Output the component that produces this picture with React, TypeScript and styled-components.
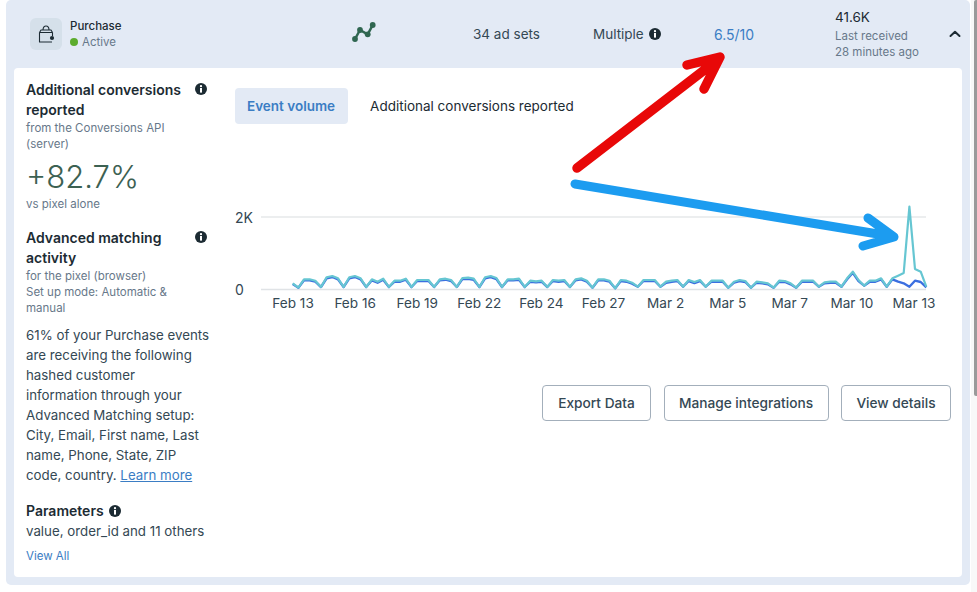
import React from "react";
import styled, { createGlobalStyle } from "styled-components";

const Global = createGlobalStyle`
  html, body { margin: 0; padding: 0; background: #fff; overflow: hidden; }
  body { font-family: "Inter", "Noto Sans", sans-serif; color: #1c2b33; }
`;

const Page = styled.div`
  position: relative;
  width: 977px;
  height: 592px;
  overflow: hidden;
`;

const Card = styled.div`
  margin: 0 7px 0 6px;
  height: 585px;
  padding: 0 8px 8px;
  box-sizing: border-box;
  background: #e3eaf5;
  border-radius: 5px;
  display: flex;
  flex-direction: column;
`;

const Header = styled.div`
  height: 68px;
  flex: none;
  display: grid;
  grid-template-columns: 322px 121px 120px 121px 121px 115px 1fr;
  padding-left: 16px;
  align-items: center;
  font-size: 13.5px;
  color: #344854;
`;

const Identity = styled.div`
  display: flex;
  align-items: center;
  gap: 8px;
`;

const IconBox = styled.div`
  width: 32px;
  height: 32px;
  border-radius: 6px;
  background: #d5e0ea;
  display: flex;
  align-items: center;
  justify-content: center;
`;

const Name = styled.div`
  font-size: 11.5px;
  font-weight: 500;
  line-height: 16px;
  color: #1c2b33;
`;

const Status = styled.div`
  display: flex;
  align-items: center;
  gap: 4px;
  font-size: 11.5px;
  line-height: 16px;
  color: #67788a;
`;

const Dot = styled.span`
  width: 8px;
  height: 8px;
  border-radius: 50%;
  background: #5cac2e;
`;

const TrendCell = styled.div`
  display: flex;
  margin-top: -4px;
`;

const MultipleCell = styled.div`
  display: flex;
  align-items: center;
  gap: 5px;
`;

const Score = styled.div`
  font-size: 14px;
  color: #3b7dc4;
`;

const Received = styled.div`
  white-space: nowrap;
`;

const Count = styled.div`
  font-size: 13.5px;
  line-height: 18px;
  margin-bottom: 2px;
  color: #1c2b33;
`;

const Muted = styled.div`
  font-size: 11.5px;
  line-height: 16px;
  color: #67788a;
`;

const Chevron = styled.div`
  display: flex;
  margin-left: -1px;
`;

const Body = styled.div`
  flex: 1;
  min-height: 0;
  background: #fff;
  border-radius: 4px;
  display: flex;
`;

const Side = styled.div`
  width: 186px;
  margin-left: 12px;
  padding-top: 12px;
  flex: none;
  display: flex;
  flex-direction: column;
`;

const SideHead = styled.div`
  display: flex;
  justify-content: space-between;
  align-items: flex-start;
  font-size: 14px;
  font-weight: 600;
  line-height: 20px;
  color: #1c2b33;
`;

const ParamHead = styled.div`
  display: flex;
  align-items: center;
  gap: 5px;
  font-size: 14px;
  font-weight: 600;
  line-height: 20px;
  color: #1c2b33;
`;

const HeadIcon = styled.span`
  margin: 3px 5px 0 0;
  display: flex;
`;

const Small = styled.div`
  max-width: 170px;
  font-size: 11.5px;
  line-height: 16px;
  color: #67788a;
`;

const Big = styled.div`
  font-size: 31px;
  font-weight: 300;
  line-height: 38px;
  margin: 6px 0 0;
  color: #3c6152;
`;

const Section = styled.div<{ $gap: number }>`
  margin-top: ${(p) => p.$gap}px;
`;

const Para = styled.div`
  font-size: 13.3px;
  line-height: 20px;
  color: #344854;
`;

const TextLink = styled.a`
  color: #3b7dc4;
  text-decoration: underline;
`;

const ViewAll = styled.a`
  display: block;
  margin-top: 7px;
  font-size: 11.5px;
  line-height: 16px;
  color: #3b7dc4;
`;

const Main = styled.div`
  flex: 1;
  min-width: 0;
  padding: 20px 11px 0 23px;
  display: flex;
  flex-direction: column;
`;

const Tabs = styled.div`
  display: flex;
  align-items: center;
  gap: 22px;
`;

const ActiveTab = styled.div`
  height: 36px;
  padding: 0 13px 0 12px;
  background: #e3eaf5;
  border-radius: 4px;
  display: flex;
  align-items: center;
  font-size: 13.5px;
  font-weight: 600;
  color: #3b7dc4;
`;

const Tab = styled.div`
  font-size: 13.5px;
  color: #1c2b33;
`;

const ChartArea = styled.div`
  margin-top: 75px;
  display: grid;
  grid-template-columns: 26px 1fr;
`;

const YAxis = styled.div`
  grid-row: 1 / 3;
  height: 100px;
  display: flex;
  flex-direction: column;
  justify-content: space-between;
  font-size: 14px;
  line-height: 18px;
  color: #344854;
  padding-top: 10px;
  box-sizing: border-box;
`;

const Plot = styled.svg`
  display: block;
`;

const XAxis = styled.div`
  display: grid;
  grid-template-columns: repeat(11, 62.1px);
  margin-left: 1px;
  font-size: 13.6px;
  line-height: 18px;
  color: #344854;
  text-align: center;
  white-space: nowrap;
`;

const Actions = styled.div`
  margin-top: 73px;
  display: flex;
  justify-content: flex-end;
  gap: 12.5px;
`;

const Button = styled.button<{ $width: number }>`
  width: ${(p) => p.$width}px;
  height: 36px;
  padding: 0;
  background: #fff;
  border: 1px solid #a3afbb;
  border-radius: 4px;
  font-family: inherit;
  font-size: 13.7px;
  font-weight: 500;
  color: #344854;
`;

const Overlay = styled.svg`
  position: absolute;
  left: 0;
  top: 0;
  pointer-events: none;
`;

const Track = styled.div`
  position: absolute;
  right: 0;
  top: 0;
  width: 6px;
  height: 592px;
  background: #f8f8f8;
`;

const Thumb = styled.div`
  position: absolute;
  right: 0;
  top: 0;
  width: 3px;
  height: 396px;
  border-radius: 2px 0 0 2px;
  background: #9a9a9a;
`;

const Info = () => (
  <svg width="12" height="12" viewBox="0 0 12 12" style={{ flex: "none" }}>
    <circle cx="6" cy="6" r="6" fill="#1c2b33" />
    <rect x="5" y="5" width="2" height="4.6" fill="#fff" />
    <circle cx="6" cy="3.2" r="1.15" fill="#fff" />
  </svg>
);

const dips = [293,291,291,291,291,291,291,291,291,291,291,291,291,293,295,290,290,290,290,293,293,293,293,290,290,287,290,0];
const days: number[][] = [
  [268,268,272],[262,258,265],[262,258,265],[268,275,266],[272,272,266],[270,270,270],[268,266,270],
  [264,263,266],[262,258,264],[268,268,266],[272,274,272],[270,272,270],[268,265,272],[268,268,272],
  [270,272,278],[270,270,270],[275,272,270],[270,276,270],[272,272,272],[275,270,273],[275,277,280],
  [272,273,280],[272,272,272],[277,275,275],[265,245,270],[272,272,265],[265,257,249],[237,245,290],
];
const blueLast: number[][] = [[268,275,280],[272,276,292]];

const px = (i: number) => 292.7 + (i * 22.63) / 4;
const py = (z: number) => 190 + z / 3;

function series(blue: boolean) {
  const pts: [number, number][] = [[px(0), py(280 + (blue ? 2 : 0))]];
  for (let d = 0; d < 28; d++) {
    let dip = dips[d];
    let vals = days[d];
    if (d === 27) dip = blue ? 290 : 50;
    if (blue && d === 26) vals = blueLast[0];
    if (blue && d === 27) vals = blueLast[1];
    pts.push([px(d * 4 + 1), py(dip)]);
    vals.forEach((v, k) => {
      const off = blue && d < 26 ? 3 : 0;
      pts.push([px(d * 4 + 2 + k), py(v + off)]);
    });
  }
  return pts.map(([x, y]) => `${x.toFixed(1)},${y.toFixed(1)}`).join(" ");
}

const labels = ["Feb 13","Feb 16","Feb 19","Feb 22","Feb 24","Feb 27","Mar 2","Mar 5","Mar 7","Mar 10","Mar 13"];

export default function App() {
  return (
    <Page>
      <Global />
      <Track />
      <Thumb />
      <Card>
        <Header>
          <Identity>
            <IconBox>
              <svg width="20" height="20" viewBox="0 0 20 20" fill="none" stroke="#1c2b33" strokeWidth="1.100" strokeLinejoin="round">
                <path d="M3.500 8.500 5 6h10l1.500 2.500M3.500 8.500h13V12M3.500 8.500v9.500h12.500" />
                <path d="M7 6C7 .6 13 .6 13 6" />
                <circle cx="16" cy="14" r="2.100" fill="#1c2b33" stroke="none" />
              </svg>
            </IconBox>
            <div>
              <Name>Purchase</Name>
              <Status><Dot />Active</Status>
            </div>
          </Identity>
          <TrendCell>
            <svg width="24" height="20" viewBox="0 0 24 20" fill="none" stroke="#2f6650" strokeWidth="2.500" strokeLinejoin="round">
              <path d="M3 17 8 8l7.700 4.300L20.700 3" />
              <circle cx="3" cy="17" r="2.900" fill="#2f6650" stroke="none" />
              <circle cx="8" cy="8" r="2.900" fill="#2f6650" stroke="none" />
              <circle cx="15.700" cy="12.300" r="2.900" fill="#2f6650" stroke="none" />
              <circle cx="20.700" cy="3" r="2.900" fill="#2f6650" stroke="none" />
            </svg>
          </TrendCell>
          <div>34 ad sets</div>
          <MultipleCell>Multiple <Info /></MultipleCell>
          <Score>6.5/10</Score>
          <Received>
            <Count>41.6K</Count>
            <Muted>Last received</Muted>
            <Muted>28 minutes ago</Muted>
          </Received>
          <Chevron>
            <svg width="12" height="8" viewBox="0 0 12 8" fill="none" stroke="#1c2b33" strokeWidth="2" strokeLinecap="round" strokeLinejoin="round">
              <path d="M1.500 6 6 1.800 10.500 6" />
            </svg>
          </Chevron>
        </Header>
        <Body>
          <Side>
            <SideHead>
              <div>Additional conversions reported</div>
              <HeadIcon><Info /></HeadIcon>
            </SideHead>
            <Small>from the Conversions API (server)</Small>
            <Big>+82.7%</Big>
            <Small>vs pixel alone</Small>
            <Section $gap={16}>
              <SideHead>
                <div>Advanced matching activity</div>
                <HeadIcon><Info /></HeadIcon>
              </SideHead>
              <Small>for the pixel (browser)</Small>
              <Small>Set up mode: Automatic &amp; manual</Small>
            </Section>
            <Section $gap={9}>
              <Para>
                61% of your Purchase events<br />
                are receiving the following<br />
                hashed customer<br />
                information through your<br />
                Advanced Matching setup:<br />
                City, Email, First name, Last<br />
                name, Phone, State, ZIP<br />
                code, country. <TextLink>Learn more</TextLink>
              </Para>
            </Section>
            <Section $gap={16}>
              <ParamHead>Parameters <Info /></ParamHead>
              <Para>value, order_id and 11 others</Para>
              <ViewAll>View All</ViewAll>
            </Section>
          </Side>
          <Main>
            <Tabs>
              <ActiveTab>Event volume</ActiveTab>
              <Tab>Additional conversions reported</Tab>
            </Tabs>
            <ChartArea>
              <YAxis>
                <div>2K</div>
                <div>0</div>
              </YAxis>
              <Plot width="691" height="95" viewBox="261 199 691 95">
                <line x1="261" x2="926" y1="217" y2="217" stroke="#e6e8ea" strokeWidth="1.500" />
                <line x1="261" x2="926" y1="289.500" y2="289.500" stroke="#e0e3e6" strokeWidth="1.500" />
                <polyline points={series(true)} fill="none" stroke="#3b6fe0" strokeWidth="2.400" strokeLinejoin="round" />
                <polyline points={series(false)} fill="none" stroke="#66c6d2" strokeWidth="2.200" strokeLinejoin="round" />
              </Plot>
              <XAxis>
                {labels.map((l) => <div key={l}>{l}</div>)}
              </XAxis>
            </ChartArea>
            <Actions>
              <Button $width={109}>Export Data</Button>
              <Button $width={165}>Manage integrations</Button>
              <Button $width={110}>View details</Button>
            </Actions>
          </Main>
        </Body>
      </Card>
      <Overlay width="977" height="592" viewBox="0 0 977 592">
        <path d="M577 168 716 61M687 65l33-8-16 32" fill="none" stroke="#e80808" strokeWidth="9.500" strokeLinecap="round" strokeLinejoin="round" />
        <path d="M575 184 890 236M868 218l26 19-31 9" fill="none" stroke="#1c9cf0" strokeWidth="9" strokeLinecap="round" strokeLinejoin="round" />
      </Overlay>
    </Page>
  );
}
